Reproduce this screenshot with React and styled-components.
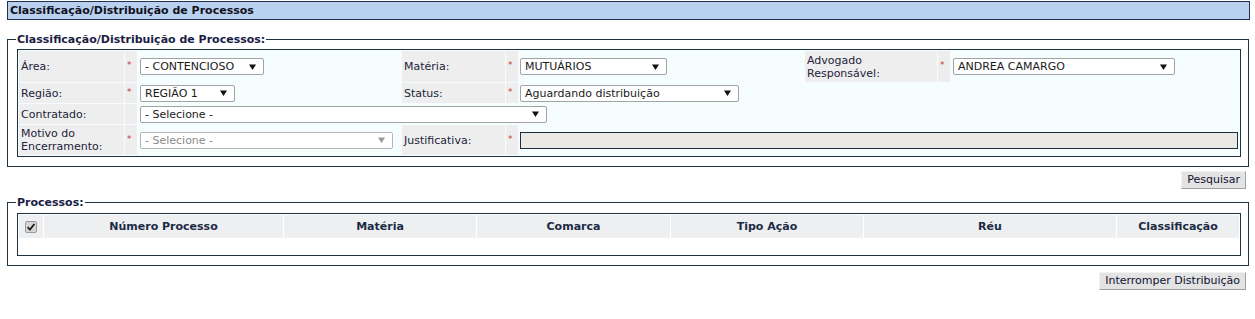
import React from "react";
import styled, { createGlobalStyle } from "styled-components";

const GlobalStyle = createGlobalStyle`
  html, body { margin: 0; padding: 0; background: #ffffff; }
  body {
    font-family: "DejaVu Sans", Verdana, sans-serif;
    font-size: 11px;
    color: #222;
  }
`;

const Page = styled.div`
  width: 1243px;
  padding: 1px 0 0 7px;
`;

const TitleBar = styled.div`
  box-sizing: border-box;
  height: 19px;
  background: #b9d1ee;
  border: 1px solid #1f3350;
  padding: 0 2px;
  font-weight: bold;
  line-height: 17px;
  color: #111122;
`;

const FieldSet = styled.fieldset`
  box-sizing: border-box;
  width: 1242px;
  margin: ${(p) => p.$mt || 0}px 0 0 0;
  padding: ${(p) => p.$pt ?? 3}px 7px 9px 9px;
  border: 1px solid #1d3340;
  min-width: 0;
`;

const Legend = styled.legend`
  padding: 0 1px;
  margin-left: -1px;
  font-weight: bold;
  color: #1c1d45;
  line-height: 13px;
`;

const FormTable = styled.table`
  width: 1224px;
  table-layout: fixed;
  border-collapse: separate;
  border-spacing: 1px;
  border: 1px solid #1d3340;
  background: #f6fdff;
`;

const Col = styled.col`
  width: ${(p) => p.$w}px;
`;

const Row = styled.tr`
  height: ${(p) => p.$h}px;
`;

const LabelCell = styled.td`
  background: #eeeeee;
  padding: 0 2px;
  vertical-align: middle;
  line-height: 13px;
  color: #23233a;
`;

const StarCell = styled.td`
  background: #eeeeee;
  padding: 0 0 0 2px;
  vertical-align: middle;
`;

const Star = styled.span`
  display: inline-block;
  color: #cc3333;
  font-size: 9px;
  line-height: 9px;
  position: relative;
  top: -2px;
`;

const FieldCell = styled.td`
  padding: 0 0 0 ${(p) => p.$pl ?? 1}px;
  vertical-align: middle;
`;

const SelectBox = styled.div`
  box-sizing: border-box;
  width: ${(p) => p.$w}px;
  height: 17px;
  border: 1px solid ${(p) => (p.$disabled ? "#b5b5b5" : "#a3a3a3")};
  border-radius: 2px;
  background: #ffffff;
  display: flex;
  align-items: center;
  justify-content: space-between;
  padding: 0 7px 0 4px;
  color: ${(p) => (p.$disabled ? "#8a8a8a" : "#1a1a1a")};
  line-height: 15px;
  white-space: nowrap;
`;

const Arrow = ({ disabled }) => (
  <svg width="7" height="6" viewBox="0 0 7 6">
    <polygon points="0,0.5 7,0.5 3.5,6" fill={disabled ? "#9a9a9a" : "#111111"} />
  </svg>
);

const Select = ({ w, value, disabled }) => (
  <SelectBox $w={w} $disabled={disabled}>
    <span>{value}</span>
    <Arrow disabled={disabled} />
  </SelectBox>
);

const TextInput = styled.div`
  box-sizing: border-box;
  width: ${(p) => p.$w}px;
  height: 17px;
  border: 1px solid #1d2e3c;
  background: #ebe9e4;
`;

const ButtonRow = styled.div`
  display: flex;
  justify-content: flex-end;
  padding: ${(p) => p.$pt}px 4px 0 0;
`;

const Button = styled.button`
  box-sizing: border-box;
  height: 18px;
  padding: 0 5px;
  font-family: inherit;
  font-size: 11px;
  line-height: 14px;
  color: #101030;
  background: #e3e3e3;
  border: 1px solid;
  border-color: #f2f2f2 #a0a0a0 #a0a0a0 #f2f2f2;
  cursor: pointer;
`;

const ListTable = styled.table`
  width: 1224px;
  table-layout: fixed;
  border-collapse: separate;
  border-spacing: 1px;
  border: 1px solid #1d3340;
  background: #ffffff;
`;

const HeadCell = styled.th`
  height: 23px;
  padding: 0;
  background: #eeeff1;
  font-weight: bold;
  text-align: center;
  vertical-align: middle;
  color: #1b2b45;
`;

const EmptyCell = styled.td`
  height: 15px;
  padding: 0;
`;

const CheckIcon = () => (
  <svg width="12" height="12" viewBox="0 0 12 12" style={{ display: "block", margin: "0 0 0 6px" }}>
    <rect x="0.5" y="0.5" width="11" height="11" rx="1.5" fill="#d6d6d6" stroke="#9b9b9b" />
    <path d="M2.6 6.2 L4.9 8.6 L9.4 3" fill="none" stroke="#1a1a1a" strokeWidth="1.8" />
  </svg>
);

const listCols = [24, 239, 192, 193, 192, 252, 122];
const listHeads = ["Número Processo", "Matéria", "Comarca", "Tipo Ação", "Réu", "Classificação"];

export default function App() {
  return (
    <>
      <GlobalStyle />
      <Page>
        <TitleBar>Classificação/Distribuição de Processos</TitleBar>

        <FieldSet $mt={13}>
          <Legend>Classificação/Distribuição de Processos:</Legend>
          <FormTable>
            <colgroup>
              <Col $w={105} />
              <Col $w={12} />
              <Col $w={263} />
              <Col $w={103} />
              <Col $w={12} />
              <Col $w={285} />
              <Col $w={132} />
              <Col $w={12} />
              <Col $w={288} />
            </colgroup>
            <tbody>
              <Row $h={31}>
                <LabelCell>Área:</LabelCell>
                <StarCell><Star>*</Star></StarCell>
                <FieldCell $pl={2}><Select w={124} value="- CONTENCIOSO" /></FieldCell>
                <LabelCell>Matéria:</LabelCell>
                <StarCell><Star>*</Star></StarCell>
                <FieldCell><Select w={147} value="MUTUÁRIOS" /></FieldCell>
                <LabelCell>Advogado<br />Responsável:</LabelCell>
                <StarCell><Star>*</Star></StarCell>
                <FieldCell $pl={2}><Select w={222} value="ANDREA CAMARGO" /></FieldCell>
              </Row>
              <Row $h={20}>
                <LabelCell>Região:</LabelCell>
                <StarCell><Star>*</Star></StarCell>
                <FieldCell $pl={2}><Select w={95} value="REGIÃO 1" /></FieldCell>
                <LabelCell>Status:</LabelCell>
                <StarCell><Star>*</Star></StarCell>
                <FieldCell><Select w={219} value="Aguardando distribuição" /></FieldCell>
                <FieldCell colSpan={3} />
              </Row>
              <Row $h={20}>
                <LabelCell>Contratado:</LabelCell>
                <StarCell />
                <FieldCell $pl={2} colSpan={7}><Select w={407} value="- Selecione -" /></FieldCell>
              </Row>
              <Row $h={30}>
                <LabelCell>Motivo do<br />Encerramento:</LabelCell>
                <StarCell><Star>*</Star></StarCell>
                <FieldCell $pl={2}><Select w={253} value="- Selecione -" disabled /></FieldCell>
                <LabelCell>Justificativa:</LabelCell>
                <StarCell><Star>*</Star></StarCell>
                <FieldCell colSpan={4}><TextInput $w={718} /></FieldCell>
              </Row>
            </tbody>
          </FormTable>
        </FieldSet>

        <ButtonRow $pt={4}>
          <Button type="button">Pesquisar</Button>
        </ButtonRow>

        <FieldSet $mt={7} $pt={4}>
          <Legend>Processos:</Legend>
          <ListTable>
            <colgroup>
              {listCols.map((w, i) => (
                <Col key={i} $w={w} />
              ))}
            </colgroup>
            <thead>
              <tr>
                <HeadCell><CheckIcon /></HeadCell>
                {listHeads.map((h) => (
                  <HeadCell key={h}>{h}</HeadCell>
                ))}
              </tr>
            </thead>
            <tbody>
              <tr>
                <EmptyCell colSpan={7} />
              </tr>
            </tbody>
          </ListTable>
        </FieldSet>

        <ButtonRow $pt={6}>
          <Button type="button">Interromper Distribuição</Button>
        </ButtonRow>
      </Page>
    </>
  );
}
